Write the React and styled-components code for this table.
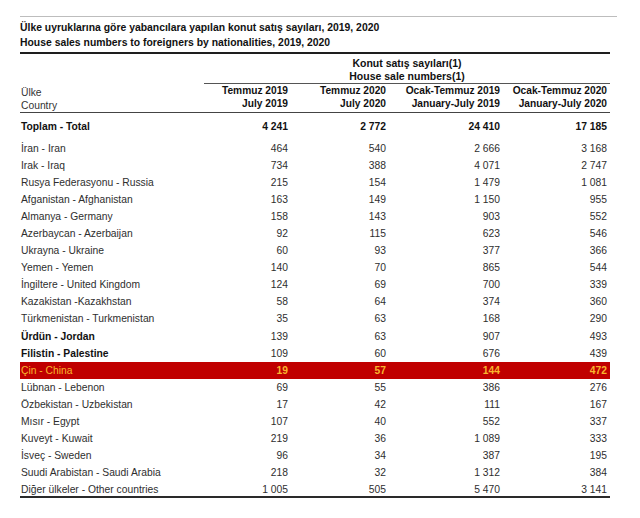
import React from "react";
import styled, { createGlobalStyle } from "styled-components";

const rows = [
  ["İran - Iran", "464", "540", "2 666", "3 168"],
  ["Irak - Iraq", "734", "388", "4 071", "2 747"],
  ["Rusya Federasyonu - Russia", "215", "154", "1 479", "1 081"],
  ["Afganistan - Afghanistan", "163", "149", "1 150", "955"],
  ["Almanya - Germany", "158", "143", "903", "552"],
  ["Azerbaycan - Azerbaijan", "92", "115", "623", "546"],
  ["Ukrayna - Ukraine", "60", "93", "377", "366"],
  ["Yemen - Yemen", "140", "70", "865", "544"],
  ["İngiltere - United Kingdom", "124", "69", "700", "339"],
  ["Kazakistan -Kazakhstan", "58", "64", "374", "360"],
  ["Türkmenistan - Turkmenistan", "35", "63", "168", "290"],
  ["Ürdün - Jordan", "139", "63", "907", "493", "bold"],
  ["Filistin - Palestine", "109", "60", "676", "439", "bold"],
  ["Çin - China", "19", "57", "144", "472", "hl"],
  ["Lübnan - Lebenon", "69", "55", "386", "276"],
  ["Özbekistan - Uzbekistan", "17", "42", "111", "167"],
  ["Mısır - Egypt", "107", "40", "552", "337"],
  ["Kuveyt - Kuwait", "219", "36", "1 089", "333"],
  ["İsveç - Sweden", "96", "34", "387", "195"],
  ["Suudi Arabistan - Saudi Arabia", "218", "32", "1 312", "384"],
  ["Diğer ülkeler - Other countries", "1 005", "505", "5 470", "3 141"],
];

const COLS = "184px 86px 98px 114px 108px";

const GlobalStyle = createGlobalStyle`
  body {
    margin: 0;
    background: #fff;
    font-family: "Liberation Sans", Arial, sans-serif;
  }
`;

const Page = styled.div`
  width: 640px;
  height: 518px;
  padding: 16px 0 0 20px;
  box-sizing: border-box;
`;

const Title = styled.div`
  width: 597px;
  border-top: 1px solid #bdbdbd;
  padding: 3px 0 2px;
  font-size: 10.4px;
  line-height: 15px;
  font-weight: bold;
  color: #111;
`;

const Table = styled.div`
  width: 590px;
  border-top: 2px solid #1e1e1e;
  border-bottom: 2px solid #2a2a2a;
`;

const Head = styled.div`
  display: grid;
  grid-template-columns: ${COLS};
  border-bottom: 1px solid #444;
`;

const CountryHead = styled.div`
  grid-row: 1 / span 2;
  align-self: end;
  padding-left: 1px;
  font-size: 10.3px;
  line-height: 13px;
  color: #333;
`;

const GroupHead = styled.div`
  grid-column: 2 / span 4;
  border-bottom: 1px solid #555;
  padding-top: 2.5px;
  text-align: center;
  font-size: 10.5px;
  line-height: 13px;
  font-weight: bold;
  color: #111;
`;

const ColHead = styled.div`
  text-align: right;
  padding: 0 ${(p) => p.$pad}px 1px 0;
  font-size: 10.2px;
  line-height: 13.5px;
  font-weight: bold;
  color: #111;
`;

const Row = styled.div`
  display: grid;
  grid-template-columns: ${COLS};
  height: ${(p) => (p.$total ? "17px" : p.$last ? "15px" : "17.1px")};
  padding: ${(p) => (p.$total ? "5px 0" : "0")};
  line-height: 17.1px;
  font-size: 10.3px;
  color: ${(p) => (p.$hl ? "#f9b52e" : "#2e2e2e")};
  background: ${(p) => (p.$hl ? "#c00000" : "transparent")};
`;

const Name = styled.div`
  padding-left: 1px;
  white-space: nowrap;
  font-weight: ${(p) => (p.$strong ? "bold" : "normal")};
  color: ${(p) => (p.$strong ? "#111" : "inherit")};
`;

const Num = styled.div`
  text-align: right;
  padding-right: ${(p) => p.$pad}px;
  font-weight: ${(p) => (p.$strong ? "bold" : "normal")};
  color: ${(p) => (p.$dark ? "#111" : "inherit")};
`;

const pads = [2, 2, 2, 3];

export default function App() {
  return (
    <>
      <GlobalStyle />
      <Page>
        <Title>
          Ülke uyruklarına göre yabancılara yapılan konut satış sayıları, 2019, 2020
          <br />
          House sales numbers to foreigners by nationalities, 2019, 2020
        </Title>
        <Table>
          <Head>
            <CountryHead>
              Ülke
              <br />
              Country
            </CountryHead>
            <GroupHead>
              Konut satış sayıları(1)
              <br />
              House sale numbers(1)
            </GroupHead>
            {[
              ["Temmuz 2019", "July 2019"],
              ["Temmuz 2020", "July 2020"],
              ["Ocak-Temmuz 2019", "January-July 2019"],
              ["Ocak-Temmuz 2020", "January-July 2020"],
            ].map(([tr, en], i) => (
              <ColHead key={tr} $pad={pads[i]}>
                {tr}
                <br />
                {en}
              </ColHead>
            ))}
          </Head>
          <Row $total>
            <Name $strong>Toplam - Total</Name>
            {["4 241", "2 772", "24 410", "17 185"].map((v, i) => (
              <Num key={i} $pad={pads[i]} $strong $dark>
                {v}
              </Num>
            ))}
          </Row>
          {rows.map(([name, a, b, c, d, kind], idx) => (
            <Row key={name} $hl={kind === "hl"} $last={idx === rows.length - 1}>
              <Name $strong={kind === "bold"}>{name}</Name>
              {[a, b, c, d].map((v, i) => (
                <Num key={i} $pad={pads[i]} $strong={kind === "hl"}>
                  {v}
                </Num>
              ))}
            </Row>
          ))}
        </Table>
      </Page>
    </>
  );
}
